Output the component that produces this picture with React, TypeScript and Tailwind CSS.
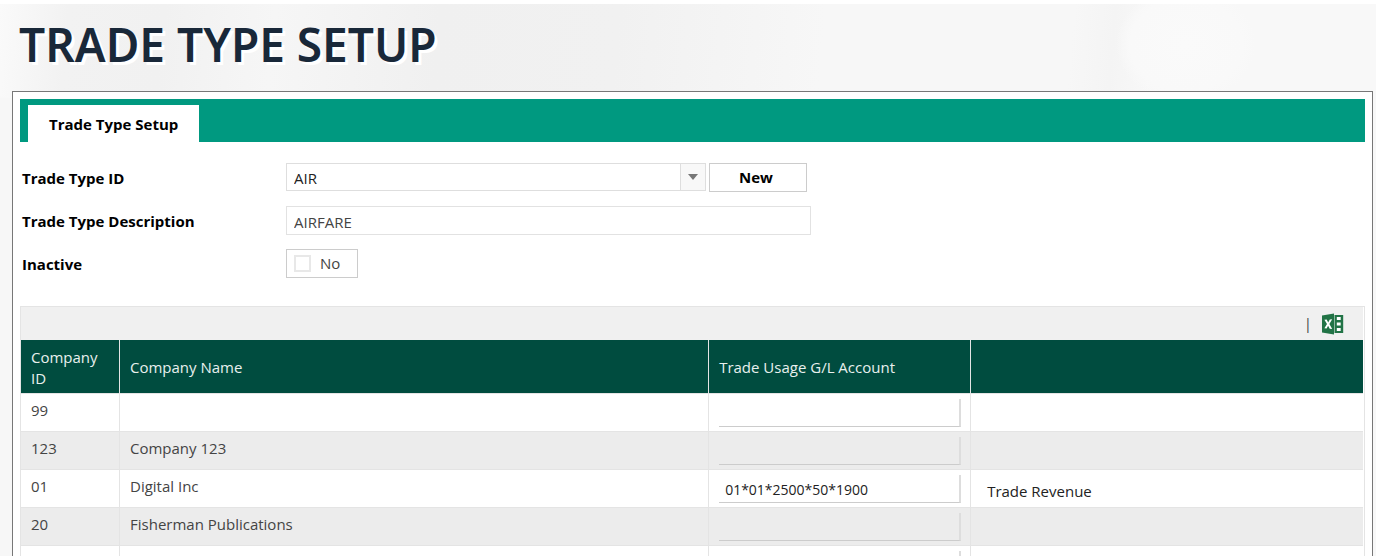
import React from "react";

type Company = { id: string; name: string; account: string; note: string };

const companies: Company[] = [
  { id: "99", name: "", account: "", note: "" },
  { id: "123", name: "Company 123", account: "", note: "" },
  { id: "01", name: "Digital Inc", account: "01*01*2500*50*1900", note: "Trade Revenue" },
  { id: "20", name: "Fisherman Publications", account: "", note: "" },
  { id: "", name: "", account: "", note: "" },
];

const columns = ["Company ID", "Company Name", "Trade Usage G/L Account", ""];

function ExcelIcon() {
  return (
    <svg viewBox="0 0 22 22" className="h-[22px] w-[22px]" aria-hidden="true">
      <path d="M0 2.6 12 0.4v21.2L0 19.4z" fill="#217346" />
      <path d="M12.5 2h8.7v18h-8.7z" fill="#217346" />
      <path d="M12 2.5h.8v17H12z" fill="#8fb9a2" />
      <path d="M14.8 4h3.9v3h-3.9zM14.8 9.5h3.9v3h-3.9zM14.8 15h3.9v3h-3.9z" fill="#fff" />
      <path d="M2.4 6.8l2.3-.2 1.5 2.9 1.6-3.1 2.4-.2-2.8 4.8 2.8 4.9-2.5-.2-1.6-3-1.5 2.8-2.2-.2 2.6-4.3z" fill="#fff" />
    </svg>
  );
}

function Backdrop() {
  return (
    <svg
      className="absolute inset-0 -z-10 h-full w-full"
      viewBox="0 0 1376 552"
      preserveAspectRatio="none"
      aria-hidden="true"
    >
      <defs>
        <linearGradient id="wash" x1="0" y1="0" x2="1" y2="0.04">
          <stop offset="0" stopColor="#fafafa" />
          <stop offset="0.05" stopColor="#f2f2f2" />
          <stop offset="0.12" stopColor="#f1f1f1" />
          <stop offset="0.2" stopColor="#f6f6f6" />
          <stop offset="0.32" stopColor="#f0f0f0" />
          <stop offset="0.45" stopColor="#f1f1f1" />
          <stop offset="0.6" stopColor="#f7f7f7" />
          <stop offset="0.78" stopColor="#f7f7f7" />
          <stop offset="0.81" stopColor="#f4f4f4" />
          <stop offset="0.84" stopColor="#f8f8f8" />
          <stop offset="1" stopColor="#f8f8f8" />
        </linearGradient>
        <radialGradient id="glow">
          <stop offset="0" stopColor="#fafafa" />
          <stop offset="0.8" stopColor="#f9f9f9" />
          <stop offset="1" stopColor="#f9f9f9" stopOpacity="0" />
        </radialGradient>
      </defs>
      <rect width="1376" height="552" fill="url(#wash)" />
      <ellipse cx="1186" cy="38" rx="70" ry="55" fill="url(#glow)" />
      <path d="M0 88h14v464H0z" fill="#f7f7f7" />
    </svg>
  );
}

const labelClass = "w-[264px] shrink-0 text-[15px] leading-[22px] font-bold text-black";

export default function App() {
  return (
    <div className="h-screen overflow-hidden bg-white pt-1 font-['Open_Sans','Noto_Sans',sans-serif] text-[15px] leading-[22px] text-[#444]">
      <main className="relative isolate flex min-h-full flex-col pr-[3px] pl-3">
        <Backdrop />
        <h1 className="px-[7px] pt-[10px] pb-[17px] font-['Noto_Sans','Open_Sans',sans-serif] text-[46px] leading-[60px] font-semibold text-[#192839] [text-shadow:3px_3px_0_#fff]">
          TRADE TYPE SETUP
        </h1>

        <section className="grow border border-[#777] bg-white p-[7px]">
          <div role="tablist" className="flex h-[43px] items-end bg-[#009980] pl-2">
            <button role="tab" aria-selected="true" className="h-[37px] bg-white px-[21px] font-bold text-black">
              Trade Type Setup
            </button>
          </div>

          <form className="flex flex-col gap-[14px] pt-[21px] pl-[2px]" onSubmit={(e) => e.preventDefault()}>
            <div className="flex h-[29px] items-center">
              <label htmlFor="trade-id" className={labelClass}>Trade Type ID</label>
              <div className="grid h-7 w-[420px] self-start">
                <select
                  id="trade-id"
                  defaultValue="AIR"
                  className="col-start-1 row-start-1 appearance-none border border-[#dedede] bg-white pt-[2px] pl-[7px] text-[#222] outline-none"
                >
                  <option>AIR</option>
                </select>
                <span className="pointer-events-none col-start-1 row-start-1 flex w-[26px] items-center justify-center justify-self-end border border-[#dedede] bg-[#f8f8f8]">
                  <svg viewBox="0 0 10 6" className="h-[6px] w-[10px]" aria-hidden="true">
                    <path d="M0 0h10L5 6z" fill="#777" />
                  </svg>
                </span>
              </div>
              <button type="button" className="ml-[3px] h-[29px] w-[98px] border border-[#ccc] bg-white pr-1 pb-[2px] font-bold text-black">
                New
              </button>
            </div>
            <div className="flex h-[29px] items-center">
              <label htmlFor="trade-desc" className={labelClass}>Trade Type Description</label>
              <input
                id="trade-desc"
                defaultValue="AIRFARE"
                className="h-[29px] w-[525px] border border-[#e2e2e2] bg-white px-[7px] pt-[2px] outline-none"
              />
            </div>
            <div className="flex h-[29px] items-center">
              <span id="inactive-label" className={labelClass}>Inactive</span>
              <label className="flex h-[29px] w-[72px] items-center gap-[9px] border border-[#ccc] pl-[7px]">
                <input
                  type="checkbox"
                  aria-labelledby="inactive-label"
                  className="h-[17px] w-[17px] appearance-none border-2 border-[#e8e8e8] bg-white checked:bg-[#009980]"
                />
                <span className="pb-[2px]">No</span>
              </label>
            </div>
          </form>

          <div className="mt-7 border border-[#e4e4e4] pr-px">
            <div className="flex h-[33px] items-center justify-end gap-[10px] bg-[#f0f0f0] pr-[19px]">
              <span className="pb-[2px] text-[#444]">|</span>
              <button type="button" aria-label="Export to Excel">
                <ExcelIcon />
              </button>
            </div>
            <table className="w-full table-fixed border-separate border-spacing-0">
              <colgroup>
                <col className="w-[99px]" />
                <col className="w-[43.9%]" />
                <col className="w-[262px]" />
                <col />
              </colgroup>
              <thead>
                <tr className="h-[53px] bg-[#004c3f] text-left text-[#e8f0ee]">
                  {columns.map((c, i) => (
                    <th key={i} scope="col" className="border-r border-[#e4e4e4] px-[10px] pt-[2px] leading-[21px] font-normal last:border-r-0">
                      {c}
                    </th>
                  ))}
                </tr>
              </thead>
              <tbody>
                {companies.map((c, i) => (
                  <tr key={i} className="h-[38px] odd:bg-white even:bg-[#ececec]">
                    <td className="border-t border-r border-[#e4e4e4] px-[10px] pb-[6px]">{c.id}</td>
                    <td className="border-t border-r border-[#e4e4e4] px-[10px] pb-[6px]">{c.name}</td>
                    <td className="border-t border-r border-[#e4e4e4] pr-[9px] pl-[10px]">
                      <input
                        aria-label={"G/L account " + c.id}
                        defaultValue={c.account}
                        className="block h-7 w-full border-r-2 border-b border-r-[#ddd] border-b-[#ccc] bg-transparent px-[6px] pt-[2px] text-[14px] text-[#222] outline-none"
                      />
                    </td>
                    <td className="border-t border-[#e4e4e4] pt-1 pl-4 text-[#222]">{c.note}</td>
                  </tr>
                ))}
              </tbody>
            </table>
          </div>
        </section>
      </main>
    </div>
  );
}
